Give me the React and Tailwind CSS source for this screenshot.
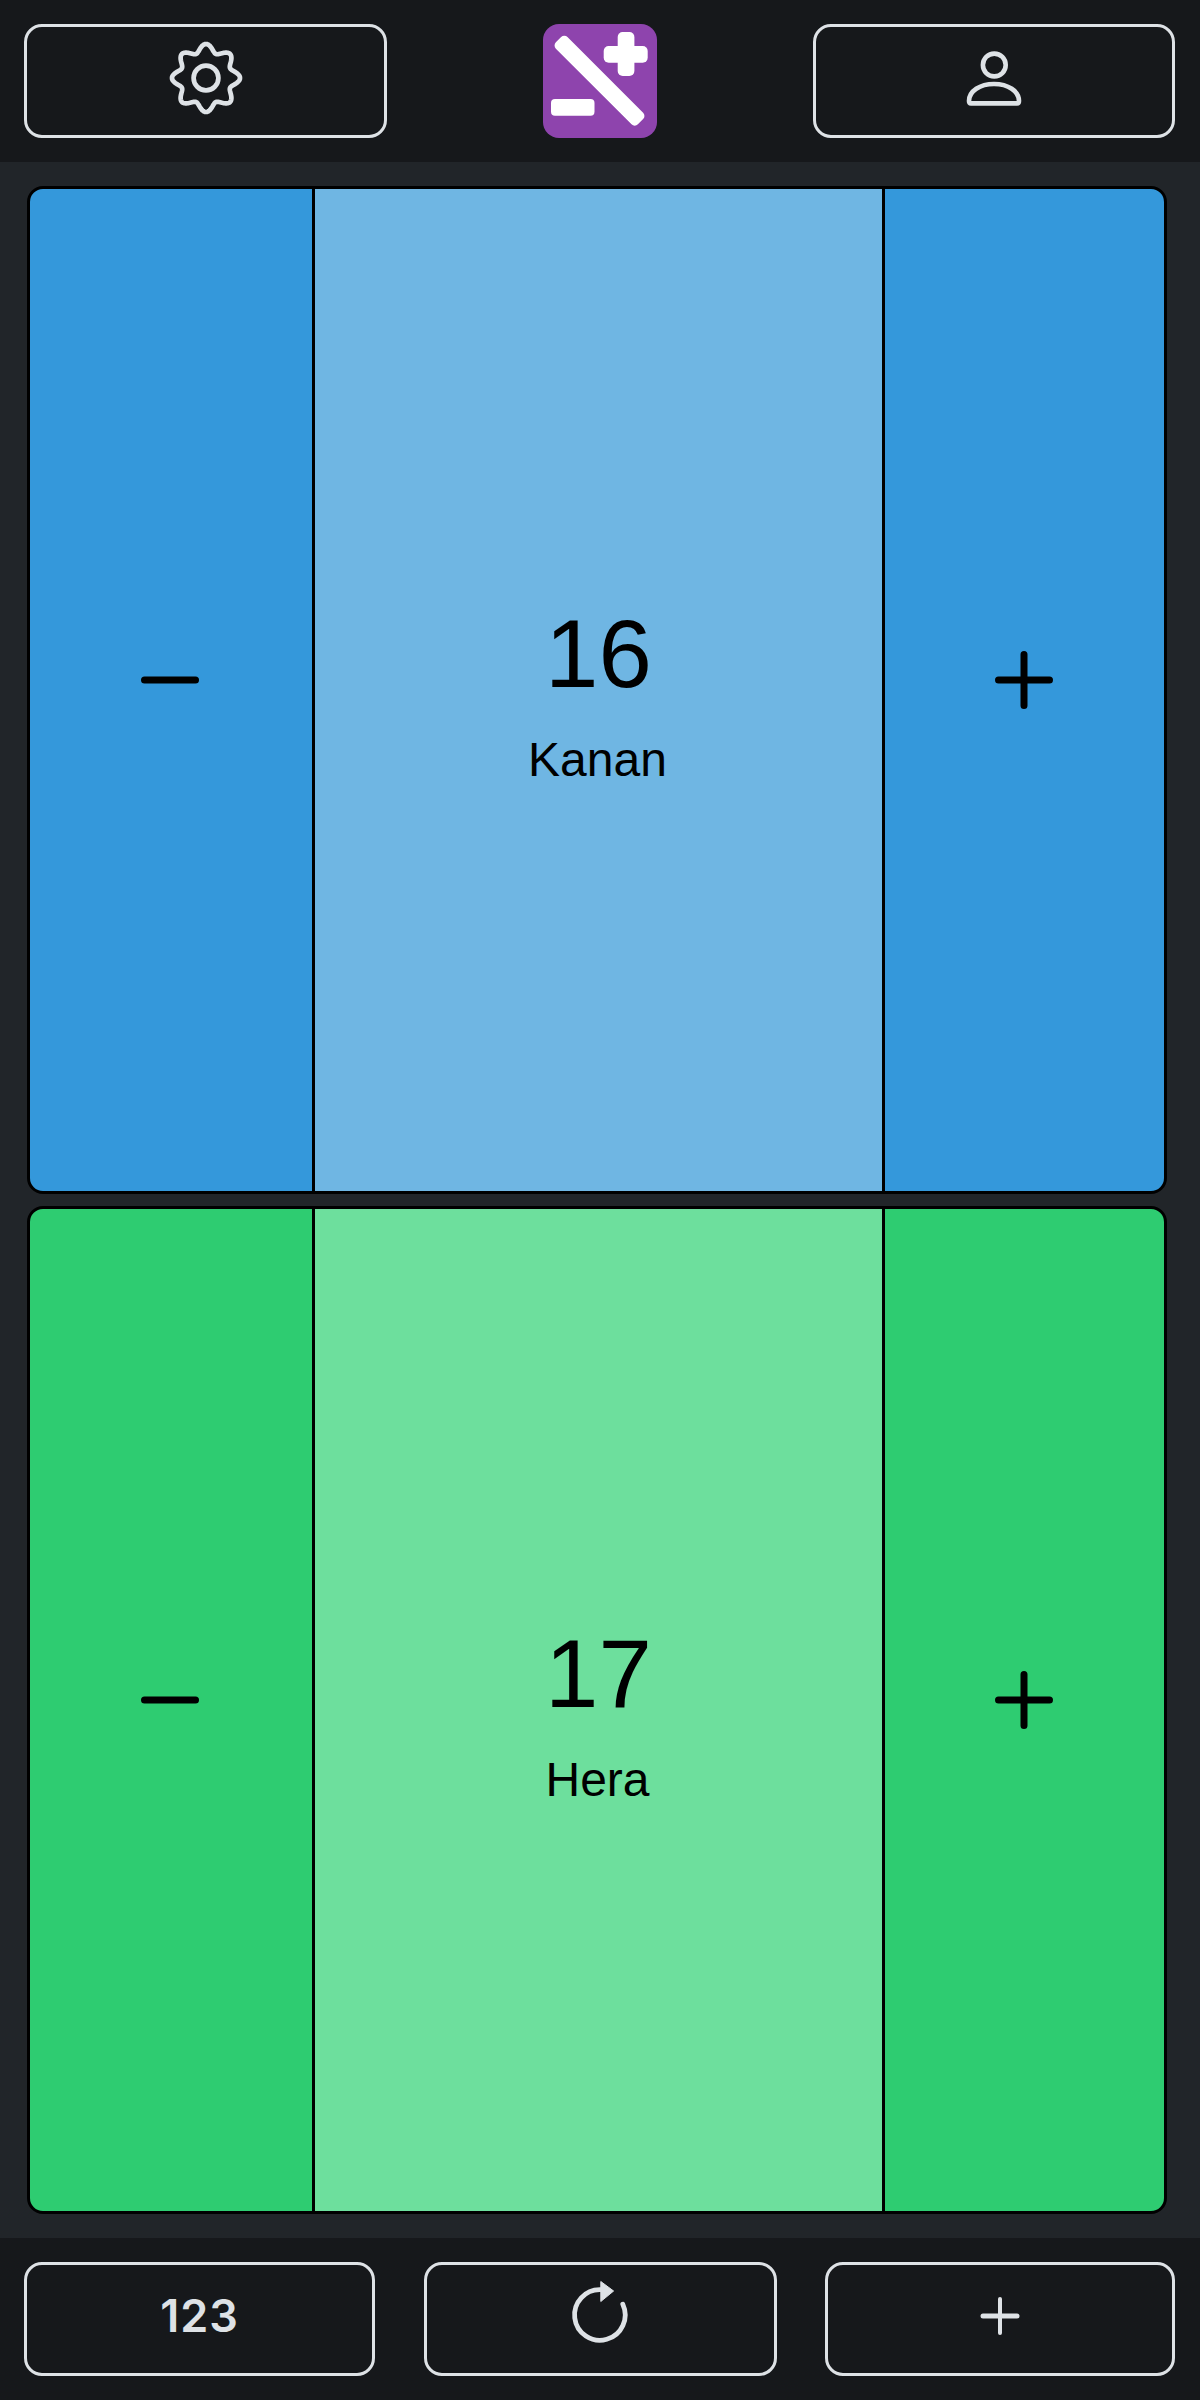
import React from "react";

const btn = "flex h-[114px] items-center justify-center rounded-[18px] border-[3px] border-[#dee2e6] bg-[#16181b] text-[#dee2e6]";

function gearPath() {
  const pts = [];
  for (let i = 0; i < 240; i++) {
    const t = (i / 240) * Math.PI * 2;
    const r = 30 + 4 * Math.cos(8 * t);
    pts.push(`${(40 + r * Math.sin(t)).toFixed(2)} ${(40 - r * Math.cos(t)).toFixed(2)}`);
  }
  return `M${pts.join("L")}Z`;
}

function Gear() {
  return (
    <svg className="mb-[6px]" width="80" height="80" viewBox="0 0 80 80" fill="none" stroke="#dee2e6" strokeWidth="4.7" strokeLinejoin="round">
      <path d={gearPath()} />
      <circle cx="40" cy="40" r="12.4" />
    </svg>
  );
}

function Minus() {
  return (
    <svg width="58" height="58" viewBox="0 0 58 58" fill="none" stroke="#000" strokeWidth="7" strokeLinecap="round">
      <path d="M3.5 29H54.5" />
    </svg>
  );
}
function Plus() {
  return (
    <svg width="58" height="58" viewBox="0 0 58 58" fill="none" stroke="#000" strokeWidth="7" strokeLinecap="round">
      <path d="M3.5 29H54.5M29 3.5V54.5" />
    </svg>
  );
}

function Card({ value, name, base, light }) {
  return (
    <div className={`flex h-[1008px] overflow-hidden rounded-[16px] border-[3px] border-black ${base}`}>
      <div className="flex w-[285px] items-center justify-center border-r-[3px] border-black pb-[20px] pr-[2px]">
        <Minus />
      </div>
      <div className={`flex w-[570px] flex-col items-center justify-center border-r-[3px] border-black pt-[5px] ${light}`}>
        <div className="text-[96px] leading-[110px] text-black [font-family:'Liberation_Sans',Arial,sans-serif]">{value}</div>
        <div className="mr-[2px] mt-[23px] text-[48px] leading-[55px] text-black [font-family:'Liberation_Sans',Arial,sans-serif]">{name}</div>
      </div>
      <div className="flex flex-1 items-center justify-center pb-[20px] pr-[1px]">
        <Plus />
      </div>
    </div>
  );
}

export default function App() {
  return (
    <div className="flex h-[2400px] w-[1200px] flex-col bg-[#212529]">
      <header className="flex h-[162px] items-center justify-between bg-[#16181b] pl-6 pr-[25px]">
        <button className={`${btn} w-[363px]`}>
          <Gear />
        </button>
        <div className="h-[114px] w-[114px] overflow-hidden rounded-[16px] bg-[#8e44ad]">
          <svg width="114" height="114" viewBox="0 0 114 114" fill="#fff">
            <rect x="-58" y="-8.2" width="116" height="16.4" rx="4.5" transform="translate(56.5 56.7) rotate(45)" />
            <rect x="60.7" y="22" width="44" height="16.7" rx="5" />
            <rect x="74.7" y="8" width="16.7" height="44" rx="5" />
            <rect x="8" y="75" width="43.5" height="16.7" rx="4" />
          </svg>
        </div>
        <button className={`${btn} w-[362px]`}>
          <svg width="60" height="60" viewBox="0 0 60 60" fill="none" stroke="#dee2e6" strokeWidth="4.6" strokeLinejoin="round">
            <circle cx="30.3" cy="14" r="11.4" />
            <path d="M5 50C5 40 16 33 30 33C44 33 55 40 55 50C55 51.5 54.5 52.4 53 52.4H7C5.5 52.4 5 51.5 5 50Z" />
          </svg>
        </button>
      </header>

      <main className="flex flex-1 flex-col gap-3 py-6 pl-[27px] pr-[33px]">
        <Card value="16" name="Kanan" base="bg-[#3498db]" light="bg-[#6fb6e3]" />
        <Card value="17" name="Hera" base="bg-[#2ecc71]" light="bg-[#6ddf9d]" />
      </main>

      <footer className="flex h-[162px] items-center justify-between bg-[#16181b] pl-6 pr-[25px]">
        <button className={`${btn} w-[351px] pb-[6px] text-[45px] font-semibold tracking-[1px] [font-family:Inter,sans-serif]`}>123</button>
        <button className={`${btn} w-[353px]`}>
          <svg width="64" height="90" viewBox="0 0 64 90" fill="none">
            <path d="M54.8 30.3A25.3 25.3 0 1 1 32.8 15.7" stroke="#dee2e6" strokeWidth="4.8" strokeLinecap="round" />
            <path d="M32.8 7.5L45.6 17L32.8 27.5Z" fill="#dee2e6" stroke="#dee2e6" strokeWidth="1" strokeLinejoin="round" />
          </svg>
        </button>
        <button className={`${btn} w-[350px] pb-[6px]`}>
          <svg width="40" height="40" viewBox="0 0 40 40" fill="none" stroke="#dee2e6" strokeLinecap="round">
            <path d="M3 20H37" strokeWidth="5" />
            <path d="M20 3V37" strokeWidth="4" />
          </svg>
        </button>
      </footer>
    </div>
  );
}
